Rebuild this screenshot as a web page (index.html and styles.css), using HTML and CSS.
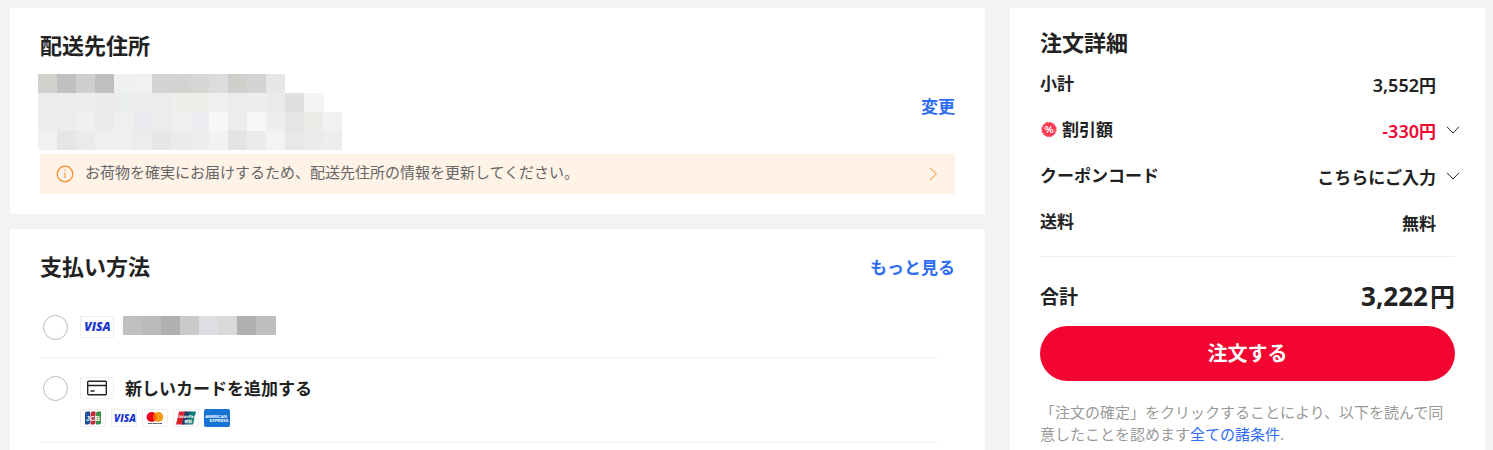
FILE: index.html
```html
<!DOCTYPE html>
<html lang="ja">
<head>
<meta charset="utf-8">
<meta name="viewport" content="width=device-width, initial-scale=1">
<title>ご注文手続き</title>
<link rel="stylesheet" href="styles.css">
</head>
<body>
<main class="checkout">
  <div class="column">
    <section class="card">
      <h2 class="title">配送先住所</h2>
      <div class="address">
        <svg class="mask" width="305" height="76" viewBox="0 0 305 76" shape-rendering="crispEdges" aria-hidden="true">
          <g>
            <path fill="#d2d1cd" d="M0 0h19v19H0z"/><path fill="#c0c0c0" d="M19 0h19v19H19z"/><path fill="#cfcfcf" d="M38 0h19v19H38z"/><path fill="#bfbfbf" d="M57 0h19v19H57z"/><path fill="#eff1f0" d="M76 0h19v19H76z"/><path fill="#f2f1ef" d="M95 0h19v19H95z"/><path fill="#d2d4d6" d="M114 0h19v19h-19z"/><path fill="#d3d3d1" d="M133 0h19v19h-19z"/><path fill="#d6d6d4" d="M152 0h19v19h-19z"/><path fill="#dadddc" d="M171 0h19v19h-19z"/><path fill="#cfcfcc" d="M190 0h19v19h-19z"/><path fill="#d2d4d6" d="M209 0h19v19h-19z"/><path fill="#e6e6e6" d="M228 0h19v19h-19z"/>
          </g>
          <g>
            <path fill="#ececec" d="M0 19h286v57H0z"/><path fill="#ebeeed" d="M38 19h19v19H38z"/><path fill="#edebe9" d="M57 19h19v19H57z"/><path fill="#e9edeb" d="M76 19h19v19H76z"/><path fill="#eeeeeb" d="M133 19h38v19h-38z"/><path fill="#efefef" d="M171 19h19v19h-19z"/><path fill="#eeeeec" d="M209 19h19v19h-19z"/><path fill="#e9eceb" d="M228 19h19v19h-19z"/><path fill="#dfdfdf" d="M247 19h19v19h-19z"/><path fill="#f4f4f4" d="M266 19h20v19h-20z"/>
          </g>
          <g>
            <path fill="#f0f0f0" d="M38 38h19v19H38z"/><path fill="#ebebeb" d="M57 38h19v19H57z"/><path fill="#efefef" d="M76 38h19v19H76z"/><path fill="#e9eaed" d="M95 38h19v19H95z"/><path fill="#efefed" d="M133 38h19v19h-19z"/><path fill="#ecedf0" d="M152 38h19v19h-19z"/><path fill="#f7f7f7" d="M171 38h19v19h-19z"/><path fill="#f5f8f7" d="M209 38h19v19h-19z"/><path fill="#eeeeec" d="M228 38h19v19h-19z"/><path fill="#e5e5e5" d="M247 38h19v19h-19z"/><path fill="#ecebe8" d="M266 38h19v19h-19z"/><path fill="#eff2f1" d="M285 38h19v19h-19z"/>
          </g>
          <g>
            <path fill="#f2f2f0" d="M0 57h19v19H0z"/><path fill="#e5e5e5" d="M19 57h19v19H19z"/><path fill="#eaeaea" d="M38 57h19v19H38z"/><path fill="#efefef" d="M57 57h38v19H57z"/><path fill="#e6e6e6" d="M114 57h19v19h-19z"/><path fill="#edebe9" d="M133 57h19v19h-19z"/><path fill="#ebeeed" d="M152 57h19v19h-19z"/><path fill="#f0f3f2" d="M171 57h19v19h-19z"/><path fill="#e4e4e4" d="M190 57h19v19h-19z"/><path fill="#e9eceb" d="M209 57h19v19h-19z"/><path fill="#f3f3f3" d="M228 57h19v19h-19z"/><path fill="#e8e8e8" d="M247 57h19v19h-19z"/><path fill="#ebebeb" d="M266 57h19v19h-19z"/><path fill="#ededed" d="M285 57h19v19h-19z"/>
          </g>
        </svg>
        <a class="action" href="#">変更</a>
      </div>
      <a class="notice" href="#">
        <svg class="notice-icon" width="18" height="18" viewBox="0 0 18 18" fill="none" stroke="#fa8c28" aria-hidden="true">
          <circle cx="9" cy="9" r="7.8" stroke-width="1.2"/><path d="M9 7.3v5.8M9 4.4v1.4"/>
        </svg>
        <span class="notice-text">お荷物を確実にお届けするため、配送先住所の情報を更新してください。</span>
        <svg width="9" height="14" viewBox="0 0 9 14" fill="none" stroke="#fa8c28" aria-hidden="true"><path d="M1 .8 7.5 7 1 13.2"/></svg>
      </a>
    </section>

    <section class="card payment">
      <div class="payment-head">
        <h2 class="title">支払い方法</h2>
        <a class="action" href="#">もっと見る</a>
      </div>
      <div class="option saved">
        <input class="radio" type="radio" name="pay" id="pay-saved" aria-label="VISA">
        <label class="option-label" for="pay-saved">
          <svg class="badge" width="34" height="22" viewBox="0 0 34 22" aria-label="VISA"><text x="17.500" y="15" class="visa visa-large">VISA</text></svg>
          <svg class="saved-mask" width="153" height="19" viewBox="0 0 153 19" shape-rendering="crispEdges" aria-hidden="true">
            <path fill="#c1c0be" d="M0 0h19v19H0z"/><path fill="#bcbbb9" d="M19 0h19v19H19z"/><path fill="#b0b0b0" d="M38 0h19v19H38z"/><path fill="#cacaca" d="M57 0h19v19H57z"/><path fill="#dcdee1" d="M76 0h19v19H76z"/><path fill="#dad9d7" d="M95 0h19v19H95z"/><path fill="#b0b0b0" d="M114 0h19v19h-19z"/><path fill="#bdbec0" d="M133 0h20v19h-20z"/>
          </svg>
        </label>
      </div>
      <div class="option new">
        <input class="radio" type="radio" name="pay" id="pay-new">
        <div class="new-body">
          <label class="option-label" for="pay-new">
            <svg class="badge" width="34" height="22" viewBox="0 0 34 22" fill="none" stroke="#222" stroke-width="1.4" aria-hidden="true"><rect x="7.7" y="4.2" width="18.6" height="13.6" rx="1"/><path d="M8 8.5h18M10.5 14h4"/></svg>
            <span class="new-name">新しいカードを追加する</span>
          </label>
          <div class="brands">
            <svg class="badge" width="26" height="18" viewBox="0 0 26 18" aria-label="JCB">
              <path fill="#20529b" d="M7 2.500h3v11q0 2-2 2H5v-11q0-2 2-2z"/><path fill="#bd2b3c" d="M12.500 2.500h3v11q0 2-2 2h-3v-11q0-2 2-2z"/><path fill="#34914a" d="M18 2.500h3v11q0 2-2 2h-3v-11q0-2 2-2z"/>
              <text x="13" y="11.500" class="jcb">JCB</text>
            </svg>
            <svg class="badge" width="26" height="18" viewBox="0 0 26 18" aria-label="VISA"><text x="14" y="12.500" class="visa">VISA</text></svg>
            <svg class="badge" width="26" height="18" viewBox="0 0 26 18" aria-label="Mastercard">
              <circle cx="9.700" cy="8" r="5.100" fill="#eb001b"/><circle cx="16.300" cy="8" r="5.100" fill="#f79e1b"/><path fill="#ff5f00" d="M13 4.100a5.100 5.100 0 0 1 0 7.800 5.100 5.100 0 0 1 0-7.800z"/>
              <path stroke="#555" stroke-width="1" stroke-dasharray="2 .4" d="M6 14.500h14"/>
            </svg>
            <svg class="badge" width="26" height="18" viewBox="0 0 26 18" aria-label="UnionPay">
              <path fill="#d8202f" d="M6 2.500h8l-3 13H3z"/><path fill="#17426b" d="M12 2.500h6l-3 13H9z"/><path fill="#0b7b78" d="M17 2.500h6l-3 13h-6z"/>
              <text x="13" y="8.500" class="union">UnionPay</text><text x="15" y="13.500" class="union">银联</text>
            </svg>
            <svg class="badge amex" width="26" height="18" viewBox="0 0 26 18" aria-label="American Express">
              <text x="12" y="8.500" class="amex-text">AMERICAN</text><text x="15" y="13" class="amex-text">EXPRESS</text>
            </svg>
          </div>
        </div>
      </div>
    </section>
  </div>

  <aside class="card summary">
    <h2 class="title">注文詳細</h2>
    <dl class="rows">
      <div class="row"><dt>小計</dt><dd class="amount">3,552<span class="unit">円</span></dd></div>
      <div class="row">
        <dt>
          <svg class="percent" width="18" height="18" viewBox="0 0 18 18" aria-hidden="true">
            <circle cx="9" cy="9.500" r="7" fill="#ff3b53"/><circle cx="9" cy="9.500" r="7.200" fill="none" stroke="#ff3b53" stroke-width="1" stroke-dasharray="2.600 1.170"/>
            <g fill="none" stroke="#fff" stroke-width="1.200"><circle cx="6.500" cy="8" r="1.500"/><circle cx="11.500" cy="11" r="1.500"/><path d="M11.200 6.300 6.800 12.700"/></g>
          </svg>割引額
        </dt>
        <dd class="amount discount">-330<span class="unit">円</span></dd>
        <dd class="toggle"><button class="chevron" type="button" aria-label="割引の詳細"><svg width="14" height="8" viewBox="0 0 14 8" fill="none" stroke="#222"><path d="M1 .8 7 7 13 .8"/></svg></button></dd>
      </div>
      <div class="row"><dt>クーポンコード</dt><dd>こちらにご入力</dd>
        <dd class="toggle"><button class="chevron" type="button" aria-label="クーポンを入力"><svg width="14" height="8" viewBox="0 0 14 8" fill="none" stroke="#222"><path d="M1 .8 7 7 13 .8"/></svg></button></dd>
      </div>
      <div class="row"><dt>送料</dt><dd>無料</dd></div>
    </dl>
    <div class="total"><span class="total-label">合計</span><span class="total-value">3,222<span class="yen">円</span></span></div>
    <button class="submit" type="button">注文する</button>
    <p class="terms">「注文の確定」をクリックすることにより、以下を読んで同意したことを認めます<a class="terms-link" href="#">全ての諸条件</a>.</p>
  </aside>
</main>
</body>
</html>
```

FILE: styles.css
```css
* { box-sizing: border-box; }

body {
  margin: 0;
  background: #f3f3f3;
  color: #222;
  font: 15px/22px "Noto Sans CJK JP", sans-serif;
}

svg { display: block; flex: none; }
a { text-decoration: none; }

.checkout {
  display: grid;
  grid-template-columns: minmax(0, 1fr) 475px;
  gap: 25px;
  min-height: 100vh;
  padding: 8px 8px 0 10px;
}

.column { display: flex; flex-direction: column; gap: 15px; }
.card { background: #fff; padding: 18px 30px 20px; }

.title { margin: 0; font-size: 22px; line-height: 36px; font-weight: 700; }
.action { color: #2f6ef2; font-size: 17px; line-height: 24px; font-weight: 700; }

.address { display: flex; justify-content: space-between; align-items: center; margin: 12px 0 4px; }
.mask { margin-left: -2px; }
.address .action { padding-bottom: 12px; }

.notice {
  display: flex;
  align-items: center;
  gap: 11px;
  min-height: 40px;
  padding: 0 17px 0 16px;
  background: #fff2e6;
  color: #666;
}
.notice-text { flex: 1; padding-bottom: 4px; }

.payment { flex: 1; padding-bottom: 7px; }
.payment-head { display: flex; justify-content: space-between; align-items: center; }
.payment-head .action { padding-top: 4px; }

.option { display: flex; margin-right: 16px; border-bottom: 1px solid #f2f2f2; }
.saved { padding: 32px 0 17px; }
.new { padding: 18px 0 15px; }

.radio {
  appearance: none;
  flex: none;
  width: 25px;
  height: 25px;
  margin: 0 12px 0 3px;
  border: 1px solid #bbb;
  border-radius: 50%;
  background: #fff;
}
.radio:checked { border: 7px solid #f20530; }

.option-label { display: flex; align-items: center; }
.saved .option-label { align-items: flex-start; padding-top: 1px; }
.saved-mask { margin-left: 9px; }
.new-body { padding-top: 1px; }
.new-name { margin-left: 11px; font-size: 17px; font-weight: 700; }

.badge { border-radius: 2px; box-shadow: inset 0 0 0 1px #eee; }
.brands { display: flex; gap: 5px; margin-top: 10px; }
.amex { background: #1673d1; box-shadow: none; }

.visa { font: italic 800 10px "Open Sans", sans-serif; fill: #1a35cf; text-anchor: middle; }
.visa-large { font-size: 12px; }
.jcb { font: 700 7px "Liberation Sans", sans-serif; fill: #fff; text-anchor: middle; }
.union { font: italic 700 4px "Noto Sans CJK SC", sans-serif; fill: #fff; text-anchor: middle; }
.amex-text { font: 700 4px "Liberation Sans", sans-serif; fill: #fff; text-anchor: middle; }

.summary { padding: 15px 30px 5px; }
.rows { margin: 0; padding: 1px 0 12px; border-bottom: 1px solid #eee; }
.row {
  display: grid;
  grid-template-columns: 1fr auto 19px;
  align-items: center;
  height: 46px;
  font-size: 17px;
  font-weight: 700;
}
.row dt { display: flex; align-items: center; gap: 4px; }
.row dd { margin: 0; padding-top: 6px; font-family: "Noto Sans", "Noto Sans CJK JP", sans-serif; }
.row .amount { padding-top: 4px; font-size: 18px; font-weight: 600; }
.row .unit { font-size: 17px; }
.row .toggle { display: flex; justify-content: flex-end; padding: 2px 0 0; }
.row .discount { color: #f20530; }
.chevron { display: flex; margin: 0 -5px 0 0; padding: 0; border: 0; background: none; cursor: pointer; }

.total { display: flex; justify-content: space-between; align-items: center; margin: 21px 0 12px; line-height: 36px; font-weight: 700; }
.total-label { font-size: 19px; }
.total-value { font: 700 26px/36px "Noto Sans", "Noto Sans CJK JP", sans-serif; }
.yen { margin-left: 2px; font-size: 25px; }

.submit {
  display: block;
  width: 100%;
  height: 55px;
  padding: 0 0 2px;
  border: 0;
  border-radius: 28px;
  background: #f20530;
  color: #fff;
  font: 700 20px/30px "Noto Sans CJK JP", sans-serif;
  cursor: pointer;
}

.terms { margin: 20px 0 0; color: #999; }
.terms-link { color: #2f6ef2; }
```
